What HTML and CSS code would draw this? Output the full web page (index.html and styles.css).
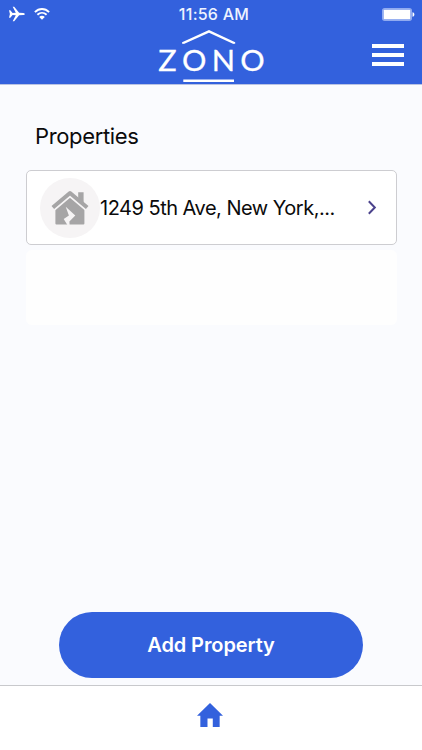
FILE: index.html
```
<!DOCTYPE html>
<html lang="en">
  <head>
    <meta charset="utf-8">
    <meta name="viewport" content="width=device-width, initial-scale=1">
    <title>Zono - Properties</title>
    <link rel="stylesheet" href="styles.css">
  </head>
  <body>
    <header class="header">
      <div class="status-bar">
        <div class="status-left">
          <svg class="plane" viewBox="0 0 16 16" width="16" height="16">
            <path d="M0 4.2h1.3L3.6 7l3.2-.2L3.7.7h1.5l4.9 6 4.3.2c1.9.2 1.9 2.1 0 2.2l-4.3.2-4.9 6H3.7l3.1-6.1L3.6 9l-2.3 2.8H0L.9 8z"/>
          </svg>
          <svg class="wifi" viewBox="0 0 16 12" width="16" height="12">
            <path class="wave" d="M.9 4.1C5-.1 11-.1 15.1 4.1M3.4 6.8c2.7-2.6 6.5-2.6 9.2 0"/>
            <path d="M5.2 8.9c1.6-1.4 4-1.4 5.6 0L8 11.8z"/>
          </svg>
        </div>
        <span class="time">11:56 AM</span>
        <svg class="battery" viewBox="0 0 33 13" width="33" height="13">
          <rect class="case" x=".75" y=".75" width="28.5" height="11.5" rx="2"/>
          <rect x="1.7" y="1.7" width="26.6" height="9.6" rx=".7"/>
          <path d="M30.5 4.2c2.5.3 2.5 4.3 0 4.6z"/>
        </svg>
      </div>
      <div class="nav">
        <svg class="logo" viewBox="0 0 108 54" width="108" height="54">
          <path d="M26.3 14.7V14L52 2.4 77 14v.7M26.3 51.8H77"/>
          <text transform="scale(1.07 1)" x="1.1 23.4 51.2 77.8" y="42">ZONO</text>
        </svg>
        <button class="menu" aria-label="Menu">
          <span></span>
          <span></span>
          <span></span>
        </button>
      </div>
    </header>

    <main class="content">
      <h1 class="title">Properties</h1>
      <div class="card">
        <div class="avatar">
          <svg viewBox="0 0 38 34" width="38" height="34">
            <path d="M4.4 17.5 19 6l14.4 11.5v15q0 1-1 1h-27q-1 0-1-1z"/>
            <path d="M27.2 1.2h5.4v12l-5.4-4.6z"/>
            <path class="roof-gap" d="M3 17.6 19 4.2l16 13.4"/>
            <path class="roof" d="M1.8 16.6 19 2l17.2 14.6"/>
            <path class="crack" d="m14.7 15.8 9.6 8.7-5.9 6 .2 3.5h-2.2l-3.7-6 5.2-3.6z"/>
          </svg>
        </div>
        <span class="address">1249 5th Ave, New York,...</span>
        <svg class="chevron" viewBox="0 0 10 16" width="10" height="16">
          <path d="m1.8 1.3 6 6.2-6 6.2"/>
        </svg>
      </div>
      <div class="card card-empty"></div>
      <button class="add">Add Property</button>
    </main>

    <footer class="tab-bar">
      <svg viewBox="0 0 28 24" width="26" height="24" preserveAspectRatio="none">
        <path d="M11.3 24H3.6V12.7H0L14 0l14 12.7h-3.6V24H17v-8.5h-5.7z"/>
      </svg>
    </footer>
  </body>
</html>
```

FILE: styles.css
```
* {
  box-sizing: border-box;
}
body {
  --blue: #3361dd;
  --grey: #a6a5a6;
  --light-grey: #f6f4f5;

  display: flex;
  flex-direction: column;
  height: 100vh;
  margin: 0;
  background-color: #fafbfe;
  color: #0b0b0c;
  font-family: Inter, "Liberation Sans", sans-serif;
  overflow: hidden;
}

button {
  border: 0;
  padding: 0;
}

/* header */
.header {
  height: 85px;
  flex: none;
  background-color: var(--blue);
  border-bottom: 1px solid #b9c3e3;
}

.status-bar {
  display: grid;
  grid-template-columns: 1fr auto 1fr;
  align-items: center;
  height: 28px;
  padding: 0 7px 0 9px;
  fill: #fff;
}
.status-left {
  display: flex;
  align-items: center;
  gap: 9px;
}
.wave {
  fill: none;
  stroke: #fff;
  stroke-width: 1.9;
}
.time {
  padding-left: 4px;
  color: #eef3ff;
  font-size: 16px;
  font-weight: 500;
  letter-spacing: 0.25px;
}
.battery {
  justify-self: end;
}
.case {
  fill: #5f84e8;
  stroke: #91abf0;
  stroke-width: 1.5;
}

.nav {
  display: grid;
  grid-template-columns: 1fr auto 1fr;
  padding: 1px 18px 0;
}
.logo {
  grid-column: 2;
  fill: none;
  stroke: #fff;
  stroke-width: 2.4;
}
.logo text {
  fill: #fff;
  stroke-width: 0.3;
  font-family: Lato, sans-serif;
  font-size: 28.5px;
}
.menu {
  display: flex;
  flex-direction: column;
  gap: 5px;
  justify-self: end;
  width: 32px;
  margin-top: 15px;
  background: none;
}
.menu span {
  height: 4px;
  background-color: #fff;
}

/* property list */
.content {
  flex: 1;
  display: flex;
  flex-direction: column;
  padding: 37px 25px 7px 26px;
}
.title {
  margin: 0 0 19px 9px;
  font-size: 22px;
  font-weight: 400;
  line-height: 29px;
  letter-spacing: -0.35px;
}
.card {
  display: flex;
  align-items: center;
  height: 75px;
  padding: 0 19px 0 13px;
  background-color: #fff;
  border: 1px solid #cdcdd1;
  border-radius: 5px;
}
.card-empty {
  margin-top: 5px;
  border-color: #fefefe;
  background-color: #fefefe;
}
.avatar {
  display: flex;
  align-items: center;
  justify-content: center;
  width: 60px;
  height: 60px;
  border-radius: 50%;
  background-color: var(--light-grey);
  fill: var(--grey);
}
.avatar svg {
  overflow: visible;
}
.roof,
.roof-gap {
  fill: none;
  stroke: var(--grey);
  stroke-width: 4;
  stroke-linejoin: round;
}
.roof-gap {
  stroke: var(--light-grey);
}
.crack {
  fill: var(--light-grey);
}
.address {
  flex: 1;
  font-size: 20px;
  line-height: 26px;
  letter-spacing: -0.5px;
  white-space: nowrap;
}
.chevron {
  fill: none;
  stroke: #4b428c;
  stroke-width: 2;
}
.add {
  align-self: center;
  width: 304px;
  height: 66px;
  margin: auto 1px 0 0;
  border-radius: 33px;
  background-color: var(--blue);
  color: #fff;
  font-family: inherit;
  font-size: 20px;
  font-weight: 600;
  letter-spacing: -0.1px;
}

/* bottom tabs */
.tab-bar {
  flex: none;
  display: flex;
  justify-content: center;
  height: 65px;
  padding: 17px 2px 0 0;
  background-color: #fff;
  border-top: 1px solid #c8c9cc;
  fill: var(--blue);
}
```
